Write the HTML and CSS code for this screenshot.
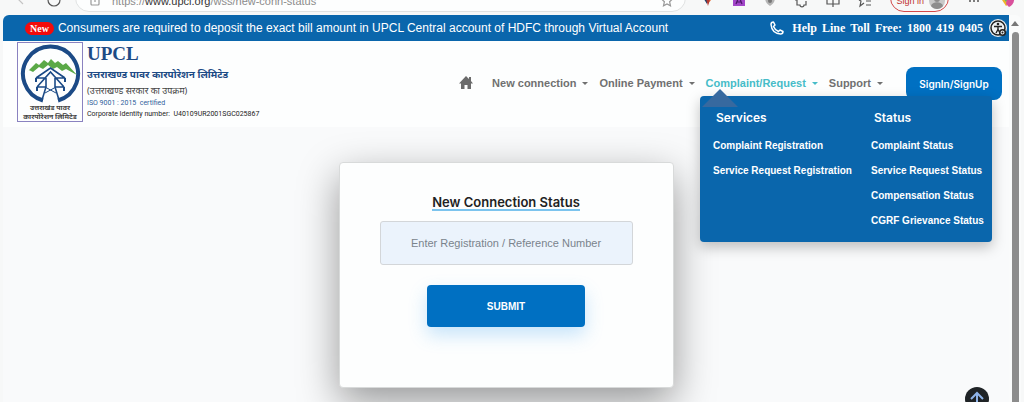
FILE: index.html
```html
<!DOCTYPE html>
<html lang="en">
<head>
  <meta charset="UTF-8">
  <meta name="viewport" content="width=device-width, initial-scale=1">
  <title>UPCL - New Connection Status</title>
  <link rel="stylesheet" href="styles.css">
</head>
<body>

<!-- browser bar -->
<div class="browser-bar">
  <div class="bar-nav">
    <svg width="12" height="28" viewBox="0 0 12 28"><path d="M9 8L3 14l6 6" stroke="#c4c4c4"/></svg>
    <svg width="16" height="28" viewBox="0 0 16 28"><circle cx="8" cy="16" r="6" stroke="#555"/></svg>
  </div>
  <div class="address">
    <svg width="10" height="28" viewBox="0 0 10 28"><rect x="1" y="12" width="8" height="9" rx="1" stroke="#999"/><path d="M5 15v3" stroke="#999"/></svg>
    <span class="url">https://<b>www.upcl.org</b>/wss/new-conn-status</span>
    <svg class="star" width="12" height="28" viewBox="0 0 12 28"><path d="M6 11l1.600 3.600 3.900.4-2.900 2.700.9 4.100L6 19.900 2.500 21.800l.9-4.100L.5 15l3.900-.4z" stroke="#999"/></svg>
  </div>
  <div class="bar-icons">
    <svg width="14" height="28" viewBox="0 0 14 28"><path d="M1 12l5 8V12z" fill="#1f3c66"/><path d="M7 12h6l-6 8z" fill="#e8743b"/><path d="M5 15l2 7 2-7z" fill="#b33b33"/></svg>
    <svg width="13" height="28" viewBox="0 0 13 28"><rect y="10" width="12" height="12" fill="#a246c8"/><path d="M3 20l2-5h2l2 5M4 18h4" stroke="#4c1769"/></svg>
    <svg width="12" height="28" viewBox="0 0 12 28"><path d="M6 22C3 20 1 18 1 13h10c0 5-2 7-5 9z" fill="#b5b5b5"/><circle cx="6" cy="17" r="2" fill="#777"/></svg>
    <svg width="14" height="28" viewBox="0 0 14 28"><path d="M1 16h2v5h3c0 2.500 4 2.500 4 0h2v-4" stroke="#555"/></svg>
    <svg width="14" height="28" viewBox="0 0 14 28"><path d="M1 12v8h12v-8M7 10v13" stroke="#555"/></svg>
    <svg width="14" height="28" viewBox="0 0 14 28"><path d="M1 16l2 1-1 5 4-3M8 17h5M8 21h5" stroke="#555"/></svg>
    <a class="sign-in" href="#">Sign in
      <svg width="16" height="16" viewBox="0 0 16 16"><circle cx="8" cy="8" r="8" fill="#c8c8c8"/><circle cx="8" cy="6" r="3" fill="#8d8d8d"/><path d="M2 13c1-5 11-5 12 0-3 4-9 4-12 0z" fill="#8d8d8d"/></svg>
    </a>
    <svg width="14" height="28" viewBox="0 0 14 28"><g fill="#555"><circle cx="3" cy="17" r="1"/><circle cx="7" cy="17" r="1"/><circle cx="11" cy="17" r="1"/></g></svg>
    <svg width="16" height="28" viewBox="0 0 16 28"><path d="M1 13h7l3 6-4 3z" fill="#f0b429"/><path d="M8 13h7c1 5-2 9-5 10l-3-3z" fill="#d9509b"/><path d="M4 13h5l-2 5z" fill="#53b27a"/></svg>
  </div>
</div>

<div class="window">
  <div class="page">

    <div class="top-bar">
      <span class="new">New</span>
      <div class="ticker">Consumers are required to deposit the exact bill amount in UPCL Central account of HDFC through Virtual Account</div>
      <div class="helpline">
        <svg width="14" height="14" viewBox="0 0 14 14"><path d="M3.500 1C2 1 1 2 1 3.500 1.500 9 5 12.500 10.500 13c1.500 0 2.500-1 2.500-2.500l-3-1.500-1.500 1.500C6 9.500 4.500 8 3.500 5.500L5 4z" fill="none" stroke="#fff" stroke-width="1.500" stroke-linejoin="round"/></svg>
        <span>Help</span><span>Line</span><span>Toll</span><span>Free:</span><span>1800</span><span>419</span><span>0405</span>
      </div>
      <button class="access" aria-label="Accessibility">
        <svg width="18" height="18" viewBox="0 0 18 18"><circle cx="9" cy="9" r="9" fill="#eef1f3"/><circle cx="9" cy="9" r="7" fill="none" stroke="#222" stroke-width="1.500"/><circle cx="9" cy="5" r="1.300" fill="#222"/><path d="M5 7.500h8M9 7.500v3M9 10.500L7 14M9 10.500l2 3.500" stroke="#222" stroke-width="1.400"/><circle cx="13.500" cy="13.500" r="2.800" fill="#eef1f3" stroke="#222" stroke-width="1.600"/><circle cx="13.500" cy="13.500" r="1" fill="#222"/></svg>
      </button>
    </div>

    <header class="header">
      <a class="brand" href="#">
        <span class="emblem">
          <svg width="63" height="60" viewBox="0 0 63 60">
            <path d="M24 57.500A27.500 27.500 0 1 1 39 57.500" fill="none" stroke="#1b4a86" stroke-width="4"/>
            <path d="M5 32L17 20l3 2 5-5 4 3 3-4 4 4 3-2 5 4 3-2 11 12-11-6-4 2-5-4-4 2-5-4-5 4-4-2-6 5-4-2z" fill="#5aa947"/>
            <path d="M17 35l14.500-10L46 35M17 35h10M36 35h10M18 44l13.500-15L45 44M18 44h9M36 44h9M27 35v9l-4 13M36 35v9l4 13" fill="none" stroke="#1b4a86" stroke-width="1.600"/>
            <path d="M26 50l11-6M37 50l-11-6" stroke="#1b4a86"/>
            <path d="M17 35v4M46 35v4M18 44v4M45 44v4" stroke="#1b4a86" stroke-width="2"/>
          </svg>
          <span class="emblem-text" lang="hi">उत्तराखंड पावर</span>
          <span class="emblem-text" lang="hi">कारपोरेशन लिमिटेड</span>
        </span>
        <span class="brand-text">
          <span class="brand-name">UPCL</span>
          <span class="brand-hindi" lang="hi">उत्तराखण्ड पावर कारपोरेशन लिमिटेड</span>
          <span class="brand-sub" lang="hi">(उत्तराखण्ड सरकार का उपक्रम)</span>
          <span class="brand-iso">ISO 9001 : 2015&nbsp; certified</span>
          <span class="brand-cin">Corporate Identity number:&nbsp; U40109UR2001SGC025867</span>
        </span>
      </a>

      <nav class="nav">
        <a class="home" href="#" aria-label="Home">
          <svg width="14" height="14" viewBox="0 0 14 14"><path d="M7 0l3 3V1h2v4l2 2.500h-2V13H8.500V9h-3v4H2V7.500H0z" fill="#6b6b6b"/></svg>
        </a>
        <a class="item" href="#">New connection</a>
        <a class="item" href="#">Online Payment</a>
        <a class="item active" href="#">Complaint/Request</a>
        <a class="item" href="#">Support</a>
      </nav>
      <button class="login">SignIn/SignUp</button>

      <div class="dropdown">
        <div class="column">
          <h3>Services</h3>
          <a href="#">Complaint Registration</a>
          <a href="#">Service Request Registration</a>
        </div>
        <div class="column">
          <h3>Status</h3>
          <a href="#">Complaint Status</a>
          <a href="#">Service Request Status</a>
          <a href="#">Compensation Status</a>
          <a href="#">CGRF Grievance Status</a>
        </div>
      </div>
    </header>

    <main class="content">
      <form class="card">
        <h1>New Connection Status</h1>
        <input type="text" aria-label="Registration or reference number" placeholder="Enter Registration / Reference Number">
        <button type="submit">SUBMIT</button>
      </form>
    </main>

    <button class="to-top" aria-label="Back to top">
      <svg width="14" height="16" viewBox="0 0 14 16"><path d="M7 15V2M1 8l6-6 6 6" fill="none" stroke="#8fb4ea" stroke-width="2"/></svg>
    </button>
  </div>

  <div class="scrollbar">
    <div class="scroll-up"></div>
    <div class="thumb"></div>
  </div>
</div>

</body>
</html>
```
FILE: styles.css
```css
* {
  box-sizing: border-box;
}
body {
  margin: 0;
  height: 100vh;
  display: flex;
  flex-direction: column;
  overflow: hidden;
  background: #f7f8f8;
  font-family: "Liberation Sans", Arial, sans-serif;
  color: #222;
}
a {
  text-decoration: none;
  color: inherit;
}
button {
  border: none;
  font-family: inherit;
  cursor: pointer;
}

/* browser bar, only its lower part is visible */
.browser-bar {
  height: 12px;
  flex-shrink: 0;
  display: flex;
  align-items: flex-end;
  overflow: hidden;
}
.browser-bar svg {
  flex-shrink: 0;
  fill: none;
  stroke-width: 1.2;
}
.bar-nav {
  display: flex;
  gap: 20px;
  padding: 0 13px 0 14px;
}
.address {
  flex: 1;
  height: 28px;
  display: flex;
  align-items: center;
  gap: 12px;
  padding: 0 12px 0 14px;
  background: #fdfefe;
  border: 1px solid #e0e2e2;
  border-radius: 14px;
}
.url {
  flex: 1;
  padding-top: 6px;
  font-size: 11px;
  line-height: 16px;
  color: #8b8b8b;
}
.url b {
  font-weight: normal;
  color: #333;
}
.bar-icons {
  display: flex;
  align-items: flex-end;
  gap: 18px;
  padding: 0 9px 0 15px;
}
.sign-in {
  height: 28px;
  display: flex;
  align-items: center;
  gap: 5px;
  padding: 6px 3px 0 5px;
  border: 1px solid #d34848;
  border-radius: 14px;
  font-size: 9px;
  white-space: nowrap;
  color: #c03030;
}

/* page and scrollbar */
.window {
  flex: 1;
  min-height: 0;
  margin: 3px 3px 0;
  display: flex;
  background: #fafbfb;
  border-radius: 6px 6px 0 0;
  overflow: hidden;
}
.page {
  flex: 1;
  display: flex;
  flex-direction: column;
  position: relative;
  background: #f9fafb;
}
.scrollbar {
  width: 12px;
  display: flex;
  flex-direction: column;
  align-items: center;
  padding-top: 6px;
}
.scroll-up {
  border: 4px solid transparent;
  border-top: none;
  border-bottom: 5px solid #777;
}
.thumb {
  flex: 1;
  width: 7px;
  margin-top: 6px;
  background: #8c8c8c;
  border-radius: 4px 4px 0 0;
}

.top-bar {
  height: 26px;
  flex-shrink: 0;
  display: flex;
  align-items: center;
  padding: 0 2px 0 22px;
  background: #0a66ac;
  color: #fff;
}
.new {
  padding: 0 5px;
  background: #f40b0b;
  border-radius: 7px;
  font: bold 10px/13px "Liberation Serif", serif;
}
.ticker {
  width: 612px;
  margin-left: 4px;
  flex-shrink: 0;
  overflow: hidden;
  white-space: nowrap;
  font-size: 12px;
  line-height: 20px;
}
.helpline {
  margin-left: auto;
  display: flex;
  align-items: center;
  gap: 5px;
  font: bold 12px/16px "Liberation Serif", serif;
}
.helpline svg {
  margin-right: 3px;
}
.access {
  display: flex;
  margin-left: 6px;
  padding: 0;
  background: none;
}

/* header */
.header {
  position: relative;
  z-index: 1;
  height: 86px;
  flex-shrink: 0;
  display: flex;
  align-items: flex-start;
  padding: 1px 7px 0 14px;
  background: #fdfefe;
}
.brand {
  display: flex;
  gap: 4px;
}
.emblem {
  width: 66px;
  height: 80px;
  display: flex;
  flex-direction: column;
  align-items: center;
  border: 1px solid #8a82c0;
  overflow: hidden;
}
.emblem svg {
  flex-shrink: 0;
}
.emblem-text {
  font: bold 7px/9px "Noto Sans", "Noto Sans Devanagari", sans-serif;
  white-space: nowrap;
  color: #444;
}
.brand-text {
  display: flex;
  flex-direction: column;
  white-space: nowrap;
}
.brand-name {
  font: bold 19px/24px "Liberation Serif", serif;
  color: #1d4b85;
}
.brand-hindi {
  font: bold 10px/17px "Noto Sans", "Noto Sans Devanagari", sans-serif;
  color: #1d4b85;
}
.brand-sub {
  font: 9px/15px "Noto Sans", "Noto Sans Devanagari", sans-serif;
  color: #444;
}
.brand-iso {
  font: 7px/11px "Roboto", sans-serif;
  color: #2f5f9c;
}
.brand-cin {
  font: 7px/11px "Roboto", sans-serif;
  color: #222;
}
.nav {
  display: flex;
  align-items: center;
  gap: 11px;
  margin: 31px 23px 0 auto;
}
.home {
  display: flex;
  margin-right: 8px;
}
.item {
  display: flex;
  align-items: center;
  gap: 6px;
  font-size: 11px;
  font-weight: bold;
  line-height: 20px;
  color: #707070;
}
.item::after {
  content: "";
  border: 3px solid transparent;
  border-top-color: currentColor;
  border-bottom: none;
}
.item.active {
  color: #46bcc8;
}
.login {
  width: 96px;
  height: 33px;
  margin-top: 25px;
  padding: 0;
  background: #0070c2;
  border-radius: 8px;
  color: #fff;
  font: 600 10px/16px "Inter", sans-serif;
}
.dropdown {
  position: absolute;
  top: 55px;
  right: 17px;
  width: 292px;
  height: 146px;
  display: flex;
  padding: 12px 12px 0 13px;
  background: #0a66ac;
  border-radius: 4px;
  box-shadow: 0 5px 14px rgba(0, 0, 0, 0.25);
  color: #fff;
}
.dropdown::before {
  content: "";
  position: absolute;
  top: -7px;
  left: 2px;
  border: 18px solid transparent;
  border-top: none;
  border-bottom-color: #37699f;
}
.column {
  width: 158px;
  flex-shrink: 0;
}
.column h3 {
  position: relative;
  margin: 0 0 5px 3px;
  font: 600 12px/20px "Inter", sans-serif;
}
.column a {
  display: block;
  font-size: 10px;
  font-weight: bold;
  line-height: 25px;
  white-space: nowrap;
}

/* form */
.content {
  flex: 1;
  display: flex;
  justify-content: center;
  align-items: flex-start;
  padding-top: 35px;
}
.card {
  width: 335px;
  display: flex;
  flex-direction: column;
  align-items: center;
  padding: 32px 40px 60px;
  background: #fdfefe;
  border: 1px solid #d8dada;
  border-radius: 4px;
  box-shadow: 0 14px 40px rgba(0, 0, 0, 0.4);
}
.card h1 {
  margin: 0 0 10px;
  border-bottom: 2px solid #7cc4ee;
  font: 600 13px/14px "Inter", sans-serif;
}
.card input {
  width: 100%;
  height: 44px;
  margin-bottom: 20px;
  background: #ebf3fc;
  border: 1px solid #d3d6d9;
  border-radius: 3px;
  font-family: inherit;
  font-size: 11px;
  text-align: center;
}
.card input::placeholder {
  color: #7a838c;
}
.card button {
  width: 158px;
  height: 42px;
  background: #0070c2;
  border-radius: 4px;
  box-shadow: 0 8px 18px rgba(60, 160, 240, 0.28);
  color: #fff;
  font-size: 10px;
  font-weight: bold;
}
.to-top {
  position: absolute;
  right: 20px;
  bottom: -9px;
  width: 24px;
  height: 24px;
  display: flex;
  justify-content: center;
  align-items: center;
  padding: 0;
  background: #1f2326;
  border-radius: 50%;
}
```
